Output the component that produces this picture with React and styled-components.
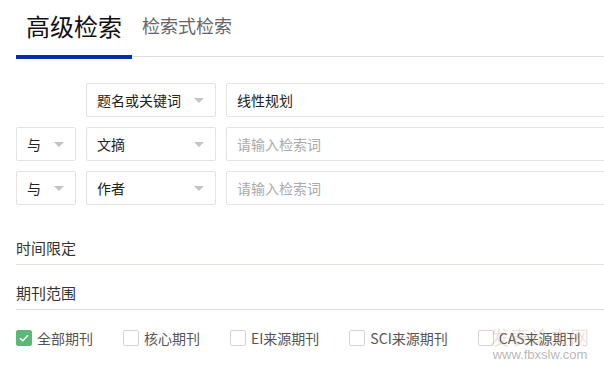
import React from "react";
import styled, { createGlobalStyle } from "styled-components";

const GlobalStyle = createGlobalStyle`
  html, body {
    margin: 0;
    padding: 0;
    background: #ffffff;
    overflow: hidden;
  }
  body {
    font-family: "Noto Sans CJK SC", "Noto Sans", sans-serif;
    color: #333;
  }
`;

const rows = [
  { logic: null, field: "题名或关键词", value: "线性规划" },
  { logic: "与", field: "文摘", value: "" },
  { logic: "与", field: "作者", value: "" },
];

const journals = [
  { label: "全部期刊", checked: true },
  { label: "核心期刊" },
  { label: "EI来源期刊" },
  { label: "SCI来源期刊" },
  { label: "CAS来源期刊" },
];

const App = () => {
  return (
    <Page>
      <GlobalStyle />
      <Tabs>
        <Tab active>高级检索</Tab>
        <Tab>检索式检索</Tab>
      </Tabs>

      <Form>
        {rows.map((row, i) => (
          <Row key={i}>
            {row.logic ? (
              <Select width={60}>
                <span>{row.logic}</span>
                <Arrow />
              </Select>
            ) : (
              <Spacer />
            )}
            <Select width={130}>
              <span>{row.field}</span>
              <Arrow />
            </Select>
            <Input>
              {row.value ? row.value : <Placeholder>请输入检索词</Placeholder>}
            </Input>
          </Row>
        ))}
      </Form>

      <Filters>
        <Section>时间限定</Section>
        <Section>期刊范围</Section>
      </Filters>

      <Checks>
        {journals.map((j) => (
          <CheckItem key={j.label}>
            <Box checked={j.checked}>
              {j.checked && (
                <svg width="10" height="8" viewBox="0 0 10 8">
                  <path
                    d="M1 4.2 L3.8 6.8 L9 1.2"
                    fill="none"
                    stroke="#fff"
                    strokeWidth="1.4"
                  />
                </svg>
              )}
            </Box>
            {j.label}
          </CheckItem>
        ))}
      </Checks>

      <Watermark>
        <Mark>发表论文网</Mark>
        <Url>www.fbxslw.com</Url>
      </Watermark>
    </Page>
  );
};

const Page = styled.div`
  position: relative;
  width: 604px;
  height: 366px;
  padding-left: 16px;
  box-sizing: border-box;
  overflow: hidden;
`;

const Tabs = styled.div`
  display: flex;
  align-items: flex-end;
  height: 57px;
  box-sizing: border-box;
  border-bottom: 1px solid #dddddd;
  width: 700px;
`;

const Tab = styled.div`
  padding: 0 10px;
  font-size: ${(p) => (p.active ? "24px" : "18px")};
  line-height: ${(p) => (p.active ? "24px" : "18px")};
  color: ${(p) => (p.active ? "#111" : "#666")};
  padding-bottom: ${(p) => (p.active ? "17px" : "22px")};
  border-bottom: ${(p) => (p.active ? "4px solid #0033a0" : "none")};
  margin-bottom: ${(p) => (p.active ? "-3px" : "0")};
`;

const Form = styled.div`
  display: flex;
  flex-direction: column;
  gap: 10px;
  margin-top: 26px;
  width: 800px;
`;

const Row = styled.div`
  display: flex;
  gap: 10px;
  height: 34px;
`;

const Spacer = styled.div`
  width: 60px;
`;

const Select = styled.div`
  width: ${(p) => p.width}px;
  box-sizing: border-box;
  border: 1px solid #e3e3e3;
  border-radius: 2px;
  display: flex;
  align-items: center;
  justify-content: space-between;
  padding: 0 11px 0 10px;
  font-size: 14px;
  color: #222;
`;

const Arrow = styled.i`
  width: 0;
  height: 0;
  border-left: 5px solid transparent;
  border-right: 5px solid transparent;
  border-top: 5px solid #c4c4c4;
`;

const Input = styled.div`
  flex: 1;
  box-sizing: border-box;
  border: 1px solid #e3e3e3;
  border-radius: 2px;
  display: flex;
  align-items: center;
  padding-left: 10px;
  font-size: 14px;
  color: #222;
`;

const Placeholder = styled.span`
  color: #aaaaaa;
`;

const Filters = styled.div`
  margin-top: 15px;
  width: 700px;
`;

const Section = styled.div`
  padding: 18px 0 6px;
  font-size: 15px;
  line-height: 20px;
  color: #333;
  border-bottom: 1px solid #e4e2da;
`;

const Checks = styled.div`
  display: flex;
  align-items: center;
  gap: 30px;
  height: 56px;
  white-space: nowrap;
`;

const CheckItem = styled.label`
  display: flex;
  align-items: center;
  gap: 5px;
  font-size: 14px;
  color: #555;
`;

const Box = styled.span`
  width: 16px;
  height: 16px;
  box-sizing: border-box;
  border-radius: 2px;
  display: flex;
  align-items: center;
  justify-content: center;
  border: 1px solid ${(p) => (p.checked ? "#5cb878" : "#d4d4d4")};
  background: ${(p) => (p.checked ? "#5cb878" : "#fff")};
`;

const Watermark = styled.div`
  position: absolute;
  left: 490px;
  top: 326px;
  display: flex;
  flex-direction: column;
  align-items: center;
  pointer-events: none;
`;

const Mark = styled.div`
  font-size: 19px;
  line-height: 22px;
  letter-spacing: 1px;
  color: rgba(200, 170, 150, 0.35);
`;

const Url = styled.div`
  font-family: "Liberation Sans", Arial, sans-serif;
  font-size: 13px;
  line-height: 14px;
  color: rgba(120, 120, 120, 0.55);
`;

export default App;
